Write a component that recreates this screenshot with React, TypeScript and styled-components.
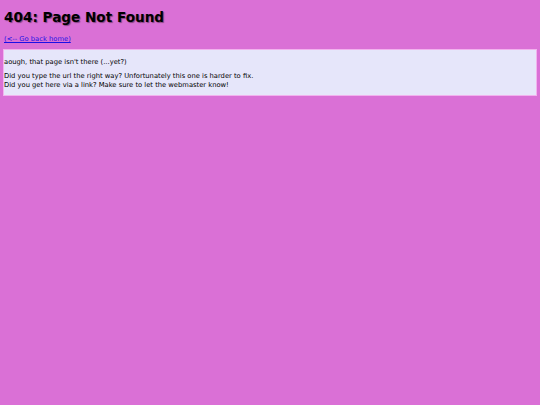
import React from 'react';
import styled, { createGlobalStyle } from 'styled-components';

const GlobalStyle = createGlobalStyle`
  html, body {
    margin: 0;
    padding: 0;
    background: #da70d6;
  }

  body {
    padding: 0 3px;
    font-family: "DejaVu Sans", Verdana, sans-serif;
    font-size: 6.75px;
    color: #000;
  }
`;

const Title = styled.h1`
  margin: 8.5px 0 11px 1px;
  font-size: 13.6px;
  font-weight: bold;
  line-height: normal;
  text-shadow: 1px 1px 1px rgba(0, 0, 0, 0.4);
`;

const BackLink = styled.a`
  display: block;
  margin-left: 1px;
  color: #1a10e6;
  text-decoration: underline;
  line-height: 7px;
`;

const NoticeBox = styled.div`
  margin-top: 6.8px;
  padding: 7.5px 0 5.5px 0;
  background: #e6e6fa;
  border: 1px solid #f2b2ee;
`;

const Para = styled.p`
  margin: 0;
  line-height: 9px;

  & + & {
    margin-top: 5px;
  }
`;

const App = () => {
  return (
    <>
      <GlobalStyle />
      <Title>404: Page Not Found</Title>
      <BackLink href="#">(&lt;-- Go back home)</BackLink>
      <NoticeBox>
        <Para>aough, that page isn't there (...yet?)</Para>
        <Para>
          Did you type the url the right way? Unfortunately this one is harder to fix.
          <br />
          Did you get here via a link? Make sure to let the webmaster know!
        </Para>
      </NoticeBox>
    </>
  );
};

export default App;
